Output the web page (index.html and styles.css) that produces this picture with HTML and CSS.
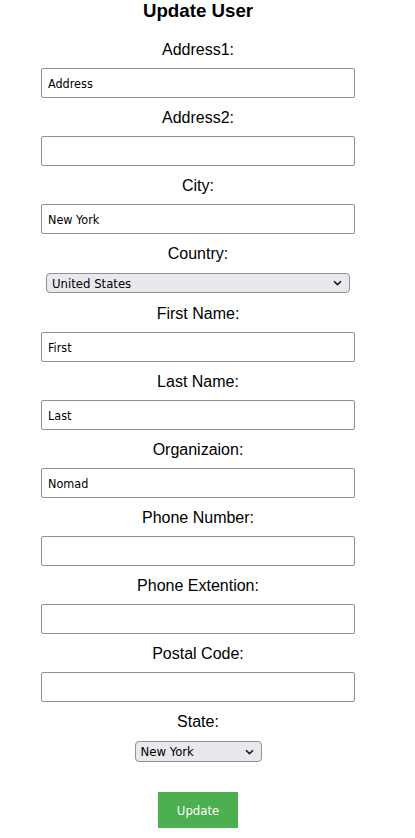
FILE: index.html
```html
<!DOCTYPE html>
<html lang="en">
<head>
<meta charset="utf-8">
<title>Update User</title>
<link rel="stylesheet" href="styles.css">
</head>
<body>
<form class="page">
  <h3 class="title">Update User</h3>

  <label class="lbl" for="a1">Address1:</label>
  <input class="txt" id="a1" type="text" value="Address">

  <label class="lbl" for="a2">Address2:</label>
  <input class="txt" id="a2" type="text" value="">

  <label class="lbl" for="city">City:</label>
  <input class="txt" id="city" type="text" value="New York">

  <label class="lbl" for="country">Country:</label>
  <div class="sel-wrap sel-country">
    <select class="sel" id="country">
      <option>United States</option>
    </select>
    <svg class="chev" width="9" height="6" viewBox="0 0 9 6"><path d="M1 1.2 L4.5 4.6 L8 1.2" fill="none" stroke="#1a1a1a" stroke-width="1.6"/></svg>
  </div>

  <label class="lbl" for="fn">First Name:</label>
  <input class="txt" id="fn" type="text" value="First">

  <label class="lbl" for="ln">Last Name:</label>
  <input class="txt" id="ln" type="text" value="Last">

  <label class="lbl" for="org">Organizaion:</label>
  <input class="txt" id="org" type="text" value="Nomad">

  <label class="lbl" for="ph">Phone Number:</label>
  <input class="txt" id="ph" type="text" value="">

  <label class="lbl" for="ext">Phone Extention:</label>
  <input class="txt" id="ext" type="text" value="">

  <label class="lbl" for="pc">Postal Code:</label>
  <input class="txt" id="pc" type="text" value="">

  <label class="lbl" for="st">State:</label>
  <div class="sel-wrap sel-state">
    <select class="sel" id="st">
      <option>New York</option>
    </select>
    <svg class="chev" width="9" height="6" viewBox="0 0 9 6"><path d="M1 1.2 L4.5 4.6 L8 1.2" fill="none" stroke="#1a1a1a" stroke-width="1.6"/></svg>
  </div>

  <button class="btn" type="button">Update</button>
</form>
</body>
</html>
```

FILE: styles.css
```css
html, body {
  margin: 0;
  padding: 0;
  background: #ffffff;
}

.page {
  width: 396px;
  margin: 0;
  text-align: center;
  font-family: "Liberation Sans", Arial, sans-serif;
  color: #000;
}

.title {
  margin: 0 0 19px;
  font-size: 18.72px;
  line-height: 21px;
  font-weight: bold;
}

.lbl {
  display: block;
  font-size: 16px;
  line-height: 18px;
  padding-top: 1px;
  margin-bottom: 9px;
  color: #000;
}

.txt {
  display: block;
  box-sizing: border-box;
  width: 314px;
  height: 30px;
  margin: 0 auto 10px;
  padding: 0 6px;
  border: 1px solid #8f8f9d;
  border-radius: 2px;
  background: #fff;
  font-family: "DejaVu Sans Condensed", "Liberation Sans", sans-serif;
  font-size: 12.5px;
  color: #000;
  text-align: left;
  outline: none;
}

.sel-wrap {
  position: relative;
  margin: 10px auto 11px;
}

.sel-country {
  width: 304px;
}

.sel-country .sel {
  height: 20px;
}

.sel-state {
  width: 127px;
  margin-bottom: 30px;
}

.sel-state .sel {
  height: 21px;
}

.sel {
  display: block;
  box-sizing: border-box;
  width: 100%;
  margin: 0;
  padding: 0 20px 0 5px;
  -webkit-appearance: none;
  appearance: none;
  border: 1px solid #8f8f9d;
  border-radius: 4px;
  background: #e9e9ed;
  font-family: "DejaVu Sans Condensed", "Liberation Sans", sans-serif;
  font-size: 13px;
  color: #000;
  text-align: left;
  outline: none;
}

.chev {
  position: absolute;
  right: 8px;
  top: 50%;
  margin-top: -3px;
  pointer-events: none;
}

.btn {
  display: block;
  width: 80px;
  height: 36px;
  margin: 0 auto;
  padding: 0;
  border: none;
  background: #4caf50;
  color: #fff;
  font-family: "DejaVu Sans Condensed", "Liberation Sans", sans-serif;
  font-size: 13px;
  cursor: pointer;
}
```
